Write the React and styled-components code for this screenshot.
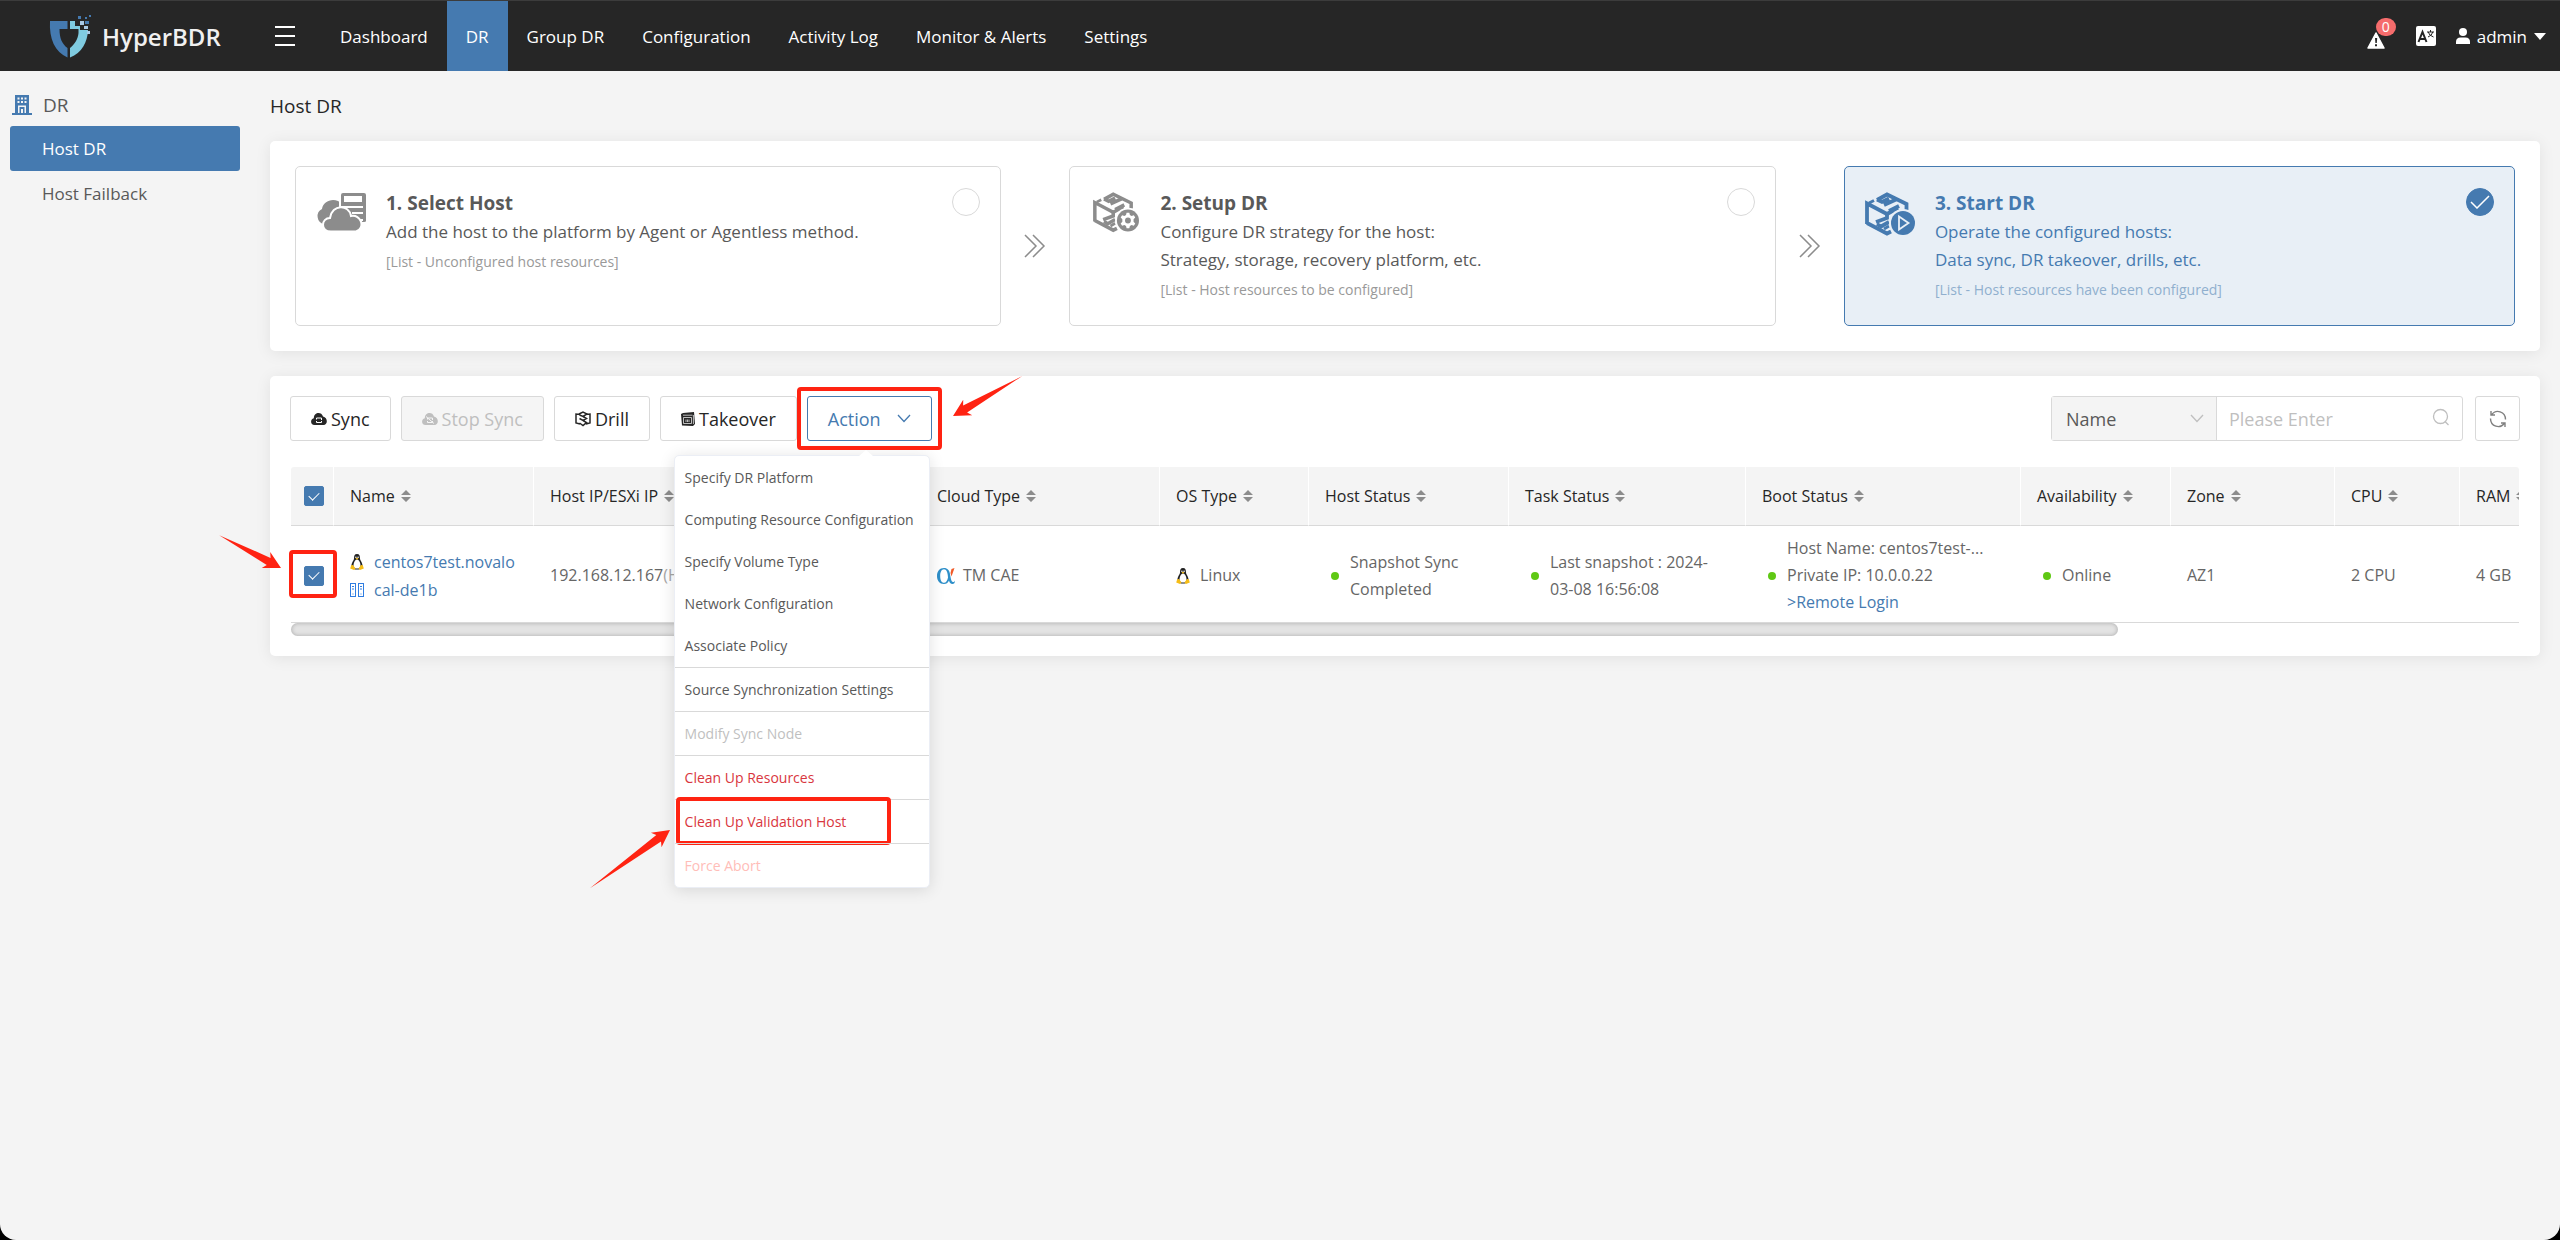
import { useState } from "react";
import styled, { createGlobalStyle } from "styled-components";

const blue = "#457ab0";
const red = "#ff2312";

const navItems = [
  "Dashboard",
  "DR",
  "Group DR",
  "Configuration",
  "Activity Log",
  "Monitor & Alerts",
  "Settings",
];

const steps = [
  {
    title: "1. Select Host",
    lines: ["Add the host to the platform by Agent or Agentless method."],
    hint: "[List - Unconfigured host resources]",
    icon: "cloud",
  },
  {
    title: "2. Setup DR",
    lines: [
      "Configure DR strategy for the host:",
      "Strategy, storage, recovery platform, etc.",
    ],
    hint: "[List - Host resources to be configured]",
    icon: "gear",
  },
  {
    title: "3. Start DR",
    lines: [
      "Operate the configured hosts:",
      "Data sync, DR takeover, drills, etc.",
    ],
    hint: "[List - Host resources have been configured]",
    icon: "play",
  },
];

const columns = [
  { label: "Name", width: 200 },
  { label: "Host IP/ESXi IP", width: 387 },
  { label: "Cloud Type", width: 239 },
  { label: "OS Type", width: 149 },
  { label: "Host Status", width: 200 },
  { label: "Task Status", width: 237 },
  { label: "Boot Status", width: 275 },
  { label: "Availability", width: 150 },
  { label: "Zone", width: 164 },
  { label: "CPU", width: 125 },
  { label: "RAM", width: 261 },
];

const configActions = [
  "Specify DR Platform",
  "Computing Resource Configuration",
  "Specify Volume Type",
  "Network Configuration",
  "Associate Policy",
];

const hostActions = [
  { label: "Source Synchronization Settings" },
  { label: "Modify Sync Node", disabled: true },
  { label: "Clean Up Resources", danger: true },
  { label: "Clean Up Validation Host", danger: true, marked: true },
  { label: "Force Abort", danger: true, disabled: true },
];

/* ---------- icons ---------- */

const Logo = () => (
  <svg width="44" height="44" viewBox="0 0 44 44" aria-hidden="true">
    <path
      fill={blue}
      d="M1 7H18.500V15H10.500C10.500 24 13 30 18.500 34V43.500C6 38 0 25 1 7Z"
    />
    <path
      fill="#7fcbe0"
      d="M21 7H26V12H31V16H39C38.500 28 33 39 21 43.500V34C26 30 29 25 29.500 19V15H21Z"
    />
    <path fill="#a9c9e4" d="M31 7h4v4h-4zM35 12h4v3h-4zM38 17h3v3h-3z" />
    <path fill={blue} d="M29 2h3v3h-3zM36 7h4v3h-4zM40 1h2v2h-2zM36 3h2v2h-2z" />
  </svg>
);

const BuildingIcon = () => (
  <svg width="20" height="20" viewBox="0 0 20 20" aria-hidden="true">
    <path
      fill={blue}
      fillRule="evenodd"
      d="M3 0H17V18H20V20H0V18H3ZM5.500 2.500V4.500H7.500V2.500ZM9 2.500V4.500H11V2.500ZM12.500 2.500V4.500H14.500V2.500ZM5.500 6V8H7.500V6ZM9 6V8H11V6ZM12.500 6V8H14.500V6ZM6 10.500V18H7.500V12H12.500V18H14V10.500ZM9 14V18H11V14Z"
    />
  </svg>
);

const AlertIcon = () => (
  <svg width="18" height="17" viewBox="0 0 18 17" aria-hidden="true">
    <path
      fill="#fff"
      stroke="#fff"
      strokeWidth="1.500"
      strokeLinejoin="round"
      d="M9 1 17 16H1Z"
    />
    <path fill="#262626" d="M8 6h2.200l-.4 5h-1.400zM8 12.200h2v2H8z" />
  </svg>
);

const LanguageIcon = () => (
  <svg width="20" height="20" viewBox="0 0 20 20" aria-hidden="true">
    <rect width="20" height="20" rx="2" fill="#fff" />
    <path
      fill="none"
      stroke="#262626"
      strokeWidth="2"
      d="M2.500 16 6.500 6 10.500 16M4 13H9"
    />
    <path
      fill="none"
      stroke="#262626"
      strokeWidth="1"
      d="M11 6H18M14.500 4V6M12 11Q16 9.500 16.800 6M12.200 6Q13 9.500 17.500 11"
    />
  </svg>
);

const UserIcon = () => (
  <svg width="14" height="16" viewBox="0 0 14 16" aria-hidden="true">
    <circle cx="7" cy="4" r="4" fill="#fff" />
    <path fill="#fff" d="M0 16V14Q0 9.500 4.500 9.500H9.500Q14 9.500 14 14V16Z" />
  </svg>
);

const CloudServerIcon = () => (
  <svg width="50" height="40" viewBox="0 0 50 40" aria-hidden="true">
    <path
      fill="#8c8c8c"
      d="M8 32A8 8 0 0 1 6 17C7 10 15 6 22 9L36 18 20 32Z"
    />
    <path
      fill="#8c8c8c"
      stroke="#fff"
      strokeWidth="2"
      d="M27 0H48Q51 0 51 3V29Q51 31 48 31H24V3Q24 0 27 0Z"
    />
    <rect x="28" y="4" width="18" height="6" fill="#fff" />
    <path
      fill="none"
      stroke="#fff"
      strokeWidth="2"
      d="M24 15H47M36 21H47M38 28H47"
    />
    <path
      fill="#8c8c8c"
      stroke="#fff"
      strokeWidth="2"
      d="M15 39.500C4 39.500 5 26 14 26C16 12 33 12 35 24C45 22 50 36 40 39.500Z"
    />
  </svg>
);

const CubeIcon = ({ kind, size }) => {
  const color = kind === "play" ? blue : "#8c8c8c";
  const halo = kind === "play" ? "#e8eff6" : "#fff";
  return (
    <svg width={size} height={size * 0.9} viewBox="0 0 50 45" aria-hidden="true">
      <g fill="none" stroke={color} strokeWidth="3.800">
        <path d="M12 8 22 2.500 41.500 12V18" />
        <path d="M12 7.500 17 10 24 6.500M19 13 31 7.500M24 19 34 14" />
        <path d="M2 32V11.500L22 22 33 16M2 31 22 41.500 26 39.500" />
        <path d="M22 20.500V26L11 30M24 30 16 34.500 12 32" />
        <path d="M4 11 9 8.500M24 34 19 37" strokeWidth="3" />
      </g>
      <circle cx="38" cy="31" r="14" fill={halo} />
      <circle cx="38" cy="31" r="12" fill={color} />
      {kind === "play" ? (
        <path
          d="M34 24.500V37.500L43.500 31Z"
          fill="none"
          stroke="#e8eff6"
          strokeWidth="1.800"
        />
      ) : (
        <>
          <path
            fill="#fff"
            d="m36.500 22.500h3l.6 2.500 1.800 1 2.500-.8 1.500 2.600-1.800 1.900v2.600l1.800 1.900-1.500 2.600-2.500-.8-1.800 1-.6 2.500h-3l-.6-2.500-1.800-1-2.500.8-1.500-2.600 1.800-1.900v-2.600l-1.800-1.900 1.500-2.600 2.500.8 1.800-1z"
          />
          <circle cx="38" cy="31" r="3.200" fill={color} />
        </>
      )}
    </svg>
  );
};

const DoubleArrowIcon = () => (
  <svg width="22" height="24" viewBox="0 0 22 24" aria-hidden="true">
    <path
      fill="none"
      stroke="#8c8c8c"
      strokeWidth="1.500"
      d="M1 1 12 12 1 23M9 1 20 12 9 23"
    />
  </svg>
);

const TickIcon = () => (
  <svg width="20" height="14" viewBox="0 0 20 14" aria-hidden="true">
    <path fill="none" stroke="#fff" strokeWidth="1.500" d="M1 7 7 13 19 1" />
  </svg>
);

const CloudSyncIcon = ({ color = "#262626", off }) => (
  <svg width="16" height="12" viewBox="0 0 16 12" aria-hidden="true">
    <path
      fill={color}
      d="M3.500 12C-.8 12-1 6 2.800 5.200C3-1 10.500-1.500 12 3.500C17 4.500 17 12 12.500 12Z"
    />
    <path
      fill="none"
      stroke={off ? "#f5f5f5" : "#fff"}
      d="M5.500 6.500V5H10.500V7M10.500 8V9.500H5.500V8"
    />
    {off && <path stroke="#f5f5f5" d="M4 3.500 12 10.500" />}
  </svg>
);

const DrillIcon = () => (
  <svg width="16" height="16" viewBox="0 0 16 16" aria-hidden="true">
    <path
      fill="none"
      stroke="#262626"
      strokeWidth="1.500"
      d="M5.500 3.500 1 3V12L5 13M10.500 3.500 15 3V12L11 13M4 3 8 1 12 3 8 5.500 4.500 4M8 5.500 11.500 7.500 8 9.500 4.500 7.500M8 9.500 11.500 11.500 8 14.500 4.500 12"
    />
  </svg>
);

const TakeoverIcon = () => (
  <svg width="14" height="14" viewBox="0 0 14 14" aria-hidden="true">
    <path fill="#262626" d="M2 1 13 0 14 12 12 14 1 13.500 0 2Z" />
    <path
      fill="none"
      stroke="#fff"
      strokeWidth=".7"
      d="M2 3.200H11.500M2.500 11.500V5.500H10.500V11.500ZM5 7.500V10M6.500 7.500V10M8 7.500V10M12.400 3V12"
    />
  </svg>
);

const ChevronDown = ({ color }) => (
  <svg width="14" height="9" viewBox="0 0 14 9" aria-hidden="true">
    <path fill="none" stroke={color} strokeWidth="1.300" d="M1 1 7 7.500 13 1" />
  </svg>
);

const SearchIcon = () => (
  <svg width="18" height="18" viewBox="0 0 18 18" aria-hidden="true">
    <circle cx="8.500" cy="8.500" r="7" fill="none" stroke="#bfbfbf" strokeWidth="1.300" />
    <path stroke="#bfbfbf" strokeWidth="1.300" d="M13 13.500 16.500 17" />
  </svg>
);

const RefreshIcon = () => (
  <svg width="18" height="18" viewBox="0 0 18 18" aria-hidden="true">
    <path
      fill="none"
      stroke="#808080"
      strokeWidth="1.400"
      d="M2 1V5H6M2.500 5C7-1.500 16.500 1.500 16.500 9.500M16 17V13H12M15.500 13C11 19.500 1.500 16.500 1.500 8.500"
    />
  </svg>
);

const SortIcon = () => (
  <svg width="10" height="12" viewBox="0 0 10 12" aria-hidden="true">
    <path fill="#8c8c8c" d="M5 0 10 5H0ZM5 12 0 7H10Z" />
  </svg>
);

const TuxIcon = () => (
  <svg width="14" height="16" viewBox="0 0 14 16" aria-hidden="true">
    <path
      fill="#222"
      d="M7 0C9.500 0 10 2 10 4.500C10 6.500 12.500 8 12.500 12C12 15 9 15.500 7 15.500C5 15.500 2 15 1.500 12C1.500 8 4 6.500 4 4.500C4 2 4.500 0 7 0Z"
    />
    <path
      fill="#fff"
      d="M7 5.500C9 5.500 10.500 9 10.500 11.500C10.500 14 9 14.500 7 14.500C5 14.500 3.500 14 3.500 11.500C3.500 9 5 5.500 7 5.500Z"
    />
    <circle cx="5.900" cy="3.200" r=".8" fill="#fff" />
    <circle cx="8.100" cy="3.200" r=".8" fill="#fff" />
    <path
      fill="#f6bd16"
      d="M5.500 4.500 7 3.800 8.500 4.500 7 5.800ZM.2 14.500 1.200 11.200 3 11 5.500 14.500 4 16ZM13.800 14.500 12.800 11.200 11 11 8.500 14.500 10 16Z"
    />
  </svg>
);

const ServerIcon = () => (
  <svg width="14" height="14" viewBox="0 0 14 14" aria-hidden="true">
    <g fill="none" stroke="#2f7de1">
      <rect x=".5" y=".5" width="5" height="13" />
      <rect x="8.500" y=".5" width="5" height="13" />
      <path d="M2 3.500H4M2 6H4M10 3.500H12M10 6H12M2.500 11H3.500M10.500 11H11.500" />
    </g>
  </svg>
);

const AlphaIcon = () => (
  <svg width="19" height="16" viewBox="0 0 19 16" aria-hidden="true">
    <path
      fill="#2e8fc9"
      fillRule="evenodd"
      d="M7 0C10.500 0 12.500 2.500 13 6C13.800 11 14.500 14 16 14C17 14 17.500 13.500 18 12.500C18 15 17 16 15.500 16C13.500 16 12.500 14.500 12 12.500C11 15 9.300 16 7 16C2.500 16 0 12.500 0 8C0 3.500 2.500 0 7 0ZM7 1.200C4.500 1.200 3.200 4 3.200 8C3.200 12 4.500 14.800 7 14.800C9 14.800 10.500 12.500 11 9.500C10.800 4.500 9.500 1.200 7 1.200Z"
    />
    <path fill="#f05a28" d="M14.500 1 17.500 0 14.500 8.500 13.500 5Z" />
  </svg>
);

const Pointer = ({ angle, length, ...rest }) => (
  <PointerSvg
    width="200"
    height="200"
    viewBox="-100 -100 200 200"
    aria-hidden="true"
    {...rest}
  >
    <path
      fill={red}
      transform={`rotate(${angle})`}
      d={`M0 0 L-17 -9 L-14 -4 L${-length} 0 L-14 4 L-17 9 Z`}
    />
  </PointerSvg>
);

/* ---------- page ---------- */

const StepIcon = ({ kind }) => {
  if (kind === "cloud") return <CloudServerIcon />;
  return <CubeIcon kind={kind} size={kind === "play" ? 50 : 46} />;
};

export default function App() {
  const [checked, setChecked] = useState(true);
  const [field, setField] = useState("Name");
  const [keyword, setKeyword] = useState("");

  const handleCheck = () => setChecked(!checked);

  return (
    <Page>
      <GlobalStyle />
      <Header>
        <Brand href="#">
          <Logo />
          <span>HyperBDR</span>
        </Brand>
        <MenuToggle type="button" aria-label="Toggle menu">
          <i />
          <i />
          <i />
        </MenuToggle>
        <Nav>
          {navItems.map((item) => (
            <NavLink key={item} href="#" $active={item === "DR"}>
              {item}
            </NavLink>
          ))}
        </Nav>
        <HeaderTools>
          <ToolButton type="button" aria-label="Alerts" $low>
            <AlertIcon />
            <Badge>0</Badge>
          </ToolButton>
          <ToolButton type="button" aria-label="Language">
            <LanguageIcon />
          </ToolButton>
          <ToolButton type="button">
            <UserIcon />
            admin
            <Caret />
          </ToolButton>
        </HeaderTools>
      </Header>

      <Body>
        <Sidebar>
          <SideTitle>
            <BuildingIcon />
            DR
          </SideTitle>
          <SideLink href="#" $active>
            Host DR
          </SideLink>
          <SideLink href="#">Host Failback</SideLink>
        </Sidebar>

        <Main>
          <PageTitle>Host DR</PageTitle>

          <StepCard>
            {steps.map((step, index) => {
              const active = step.icon === "play";
              return [
                index > 0 && (
                  <StepArrow key={`arrow-${index}`}>
                    <DoubleArrowIcon />
                  </StepArrow>
                ),
                <Step key={step.title} $active={active}>
                  <StepIconBox $inset={step.icon === "gear"}>
                    <StepIcon kind={step.icon} />
                  </StepIconBox>
                  <StepText>
                    <h2>{step.title}</h2>
                    {step.lines.map((line) => (
                      <p key={line}>{line}</p>
                    ))}
                    <small>{step.hint}</small>
                  </StepText>
                  <StepMark $active={active}>{active && <TickIcon />}</StepMark>
                </Step>,
              ];
            })}
          </StepCard>

          <ListCard>
            <Toolbar>
              <Button type="button">
                <CloudSyncIcon />
                Sync
              </Button>
              <Button type="button" disabled>
                <CloudSyncIcon color="#bfbfbf" off />
                Stop Sync
              </Button>
              <Button type="button">
                <DrillIcon />
                Drill
              </Button>
              <Button type="button">
                <TakeoverIcon />
                Takeover
              </Button>
              <ActionBox>
                <ActionButton type="button" aria-haspopup="menu">
                  Action
                  <ChevronDown color={blue} />
                </ActionButton>
                <Menu>
                  <MenuGroup>
                    {configActions.map((label) => (
                      <MenuItem key={label} type="button">
                        {label}
                      </MenuItem>
                    ))}
                  </MenuGroup>
                  {hostActions.map((item) => (
                    <MenuItem
                      key={item.label}
                      type="button"
                      disabled={item.disabled}
                      $danger={item.danger}
                      $divided
                    >
                      {item.label}
                      {item.marked && (
                        <>
                          <ItemMark />
                          <ItemPointer angle={-36} length={99} />
                        </>
                      )}
                    </MenuItem>
                  ))}
                </Menu>
                <ActionMark />
                <ActionPointer angle={150} length={80} />
              </ActionBox>

              <SearchGroup>
                <SelectBox>
                  <select
                    aria-label="Search field"
                    value={field}
                    onChange={(e) => setField(e.target.value)}
                  >
                    <option>Name</option>
                  </select>
                  <ChevronDown color="#bfbfbf" />
                </SelectBox>
                <InputBox>
                  <input
                    type="text"
                    aria-label="Keyword"
                    placeholder="Please Enter"
                    value={keyword}
                    onChange={(e) => setKeyword(e.target.value)}
                  />
                  <SearchIcon />
                </InputBox>
              </SearchGroup>
              <RefreshButton type="button" aria-label="Refresh">
                <RefreshIcon />
              </RefreshButton>
            </Toolbar>

            <TableWrapper>
              <Table>
                <colgroup>
                  <Col $width={43} />
                  {columns.map((column) => (
                    <Col key={column.label} $width={column.width} />
                  ))}
                </colgroup>
                <thead>
                  <tr>
                    <th>
                      <Checkbox
                        type="checkbox"
                        aria-label="Select all hosts"
                        checked={checked}
                        onChange={handleCheck}
                      />
                    </th>
                    {columns.map((column) => (
                      <th key={column.label}>
                        <HeadCell>
                          {column.label}
                          <SortIcon />
                        </HeadCell>
                      </th>
                    ))}
                  </tr>
                </thead>
                <tbody>
                  <tr>
                    <td>
                      <Checkbox
                        type="checkbox"
                        aria-label="Select centos7test.novalocal-de1b"
                        checked={checked}
                        onChange={handleCheck}
                      />
                    </td>
                    <td>
                      <HostName>
                        <IconColumn>
                          <TuxIcon />
                          <ServerIcon />
                        </IconColumn>
                        <a href="#">centos7test.novalocal-de1b</a>
                      </HostName>
                    </td>
                    <td>
                      192.168.12.167<Muted>(H</Muted>
                    </td>
                    <td>
                      <IconCell>
                        <AlphaIcon />
                        TM CAE
                      </IconCell>
                    </td>
                    <td>
                      <IconCell $wide>
                        <TuxIcon />
                        Linux
                      </IconCell>
                    </td>
                    <td>
                      <Status>
                        Snapshot Sync
                        <br />
                        Completed
                      </Status>
                    </td>
                    <td>
                      <Status>
                        Last snapshot : 2024-
                        <br />
                        03-08 16:56:08
                      </Status>
                    </td>
                    <td>
                      <Status>
                        Host Name: centos7test-...
                        <br />
                        Private IP: 10.0.0.22
                        <br />
                        <a href="#">&gt;Remote Login</a>
                      </Status>
                    </td>
                    <td>
                      <Status>Online</Status>
                    </td>
                    <td>AZ1</td>
                    <td>2 CPU</td>
                    <td>4 GB</td>
                  </tr>
                </tbody>
              </Table>
            </TableWrapper>
            <ScrollTrack>
              <ScrollThumb />
              <RowMark />
              <RowPointer angle={28} length={70} />
            </ScrollTrack>
          </ListCard>
        </Main>
      </Body>
    </Page>
  );
}

const GlobalStyle = createGlobalStyle`
  * {
    box-sizing: border-box;
  }

  body {
    margin: 0;
    background: #000;
  }

  body, button, input, select {
    font-family: "Open Sans", "Noto Sans", sans-serif;
    font-size: 17px;
  }

  a {
    color: ${blue};
    text-decoration: none;
  }

  button {
    cursor: pointer;
  }

  svg {
    display: block;
    flex-shrink: 0;
  }
`;

const Page = styled.div`
  min-height: 100vh;
  background: #f4f4f4;
  border-radius: 0 0 16px 16px;
  overflow: hidden;
  color: #595959;
`;

const Header = styled.header`
  display: flex;
  height: 71px;
  background: #262626;
  border-top: 1px solid #3c3c3c;
`;

const Brand = styled.a`
  display: flex;
  align-items: center;
  gap: 9px;
  width: 226px;
  margin-left: 49px;
  color: #f0f0f0;
  font-size: 24px;
  font-weight: 600;
`;

const MenuToggle = styled.button`
  display: flex;
  flex-direction: column;
  justify-content: center;
  gap: 7px;
  padding: 0;
  margin-right: 26px;
  border: 0;
  background: none;

  i {
    width: 20px;
    height: 2px;
    background: #fff;
  }
`;

const Nav = styled.nav`
  display: flex;
`;

const NavLink = styled.a`
  display: flex;
  align-items: center;
  padding: 0 19px;
  color: #fff;
  background: ${({ $active }) => ($active ? blue : "transparent")};
`;

const HeaderTools = styled.div`
  display: flex;
  align-items: center;
  gap: 20px;
  margin-left: auto;
  padding-right: 14px;
`;

const ToolButton = styled.button`
  position: relative;
  display: flex;
  align-items: center;
  gap: 7px;
  padding: 0;
  margin-right: ${({ $low }) => ($low ? "11px" : "0")};
  padding-top: ${({ $low }) => ($low ? "8px" : "0")};
  border: 0;
  background: none;
  color: #fff;
`;

const Badge = styled.span`
  position: absolute;
  top: -6px;
  left: 9px;
  width: 20px;
  height: 18px;
  border-radius: 9px;
  background: #f56c6c;
  font-size: 14px;
  line-height: 18px;
`;

const Caret = styled.i`
  border: 6px solid transparent;
  border-top: 7px solid #fff;
  border-bottom: 0;
`;

const Body = styled.div`
  display: flex;
`;

const Sidebar = styled.aside`
  flex: 0 0 250px;
  padding: 13px 10px;
`;

const SideTitle = styled.div`
  display: flex;
  align-items: center;
  gap: 11px;
  height: 42px;
  padding-left: 2px;
  font-size: 19px;
`;

const SideLink = styled.a`
  display: flex;
  align-items: center;
  height: 45px;
  padding-left: 32px;
  border-radius: 3px;
  color: ${({ $active }) => ($active ? "#fff" : "#595959")};
  background: ${({ $active }) => ($active ? blue : "transparent")};
`;

const Main = styled.main`
  flex: 1;
  min-width: 0;
  padding: 0 20px;
`;

const PageTitle = styled.h1`
  margin: 0;
  color: #262626;
  font-size: 19px;
  font-weight: 400;
  line-height: 70px;
`;

const Card = styled.section`
  background: #fff;
  border-radius: 5px;
  box-shadow: 0 2px 16px rgba(0, 0, 0, 0.08);
`;

const StepCard = styled(Card)`
  display: grid;
  grid-template-columns: 1fr 68px 1fr 68px 0.95fr;
  padding: 25px;
  margin-bottom: 25px;
`;

const StepArrow = styled.div`
  display: flex;
  align-items: center;
  justify-content: center;
`;

const Step = styled.div`
  display: flex;
  height: 160px;
  padding: 21px 20px;
  border: 1px solid ${({ $active }) => ($active ? blue : "#d9d9d9")};
  border-radius: 5px;
  color: ${({ $active }) => ($active ? blue : "#595959")};
  background: ${({ $active }) => ($active ? "#e8eff6" : "#fff")};

  small {
    color: ${({ $active }) => ($active ? "#90afce" : "#999")};
  }
`;

const StepIconBox = styled.div`
  width: 70px;
  padding-top: 4px;
  padding-left: ${({ $inset }) => ($inset ? "3px" : "0")};
`;

const StepText = styled.div`
  flex: 1;

  h2 {
    margin: 0;
    font-size: 19px;
    font-weight: 700;
    line-height: 30px;
  }

  p {
    margin: 0;
    line-height: 28px;
  }

  small {
    display: block;
    font-size: 14px;
    line-height: 32px;
  }
`;

const StepMark = styled.span`
  display: flex;
  align-items: center;
  justify-content: center;
  width: 28px;
  height: 28px;
  border: 1px solid ${({ $active }) => ($active ? blue : "#d9d9d9")};
  border-radius: 50%;
  background: ${({ $active }) => ($active ? blue : "#fff")};
`;

const ListCard = styled(Card)`
  padding: 20px;
`;

const Toolbar = styled.div`
  display: flex;
  gap: 10px;
  margin-bottom: 26px;
`;

const Button = styled.button`
  display: flex;
  align-items: center;
  gap: 4px;
  height: 45px;
  padding: 0 20px;
  border: 1px solid #d9d9d9;
  border-radius: 3px;
  color: #262626;
  background: #fff;
  font-size: 18px;

  &:disabled {
    color: #bfbfbf;
    background: #f5f5f5;
    cursor: not-allowed;
  }
`;

const ActionBox = styled.div`
  position: relative;
  z-index: 2;
`;

const ActionButton = styled(Button)`
  gap: 16px;
  border-color: ${blue};
  color: ${blue};
`;

const Menu = styled.div`
  position: absolute;
  top: 59px;
  right: 2px;
  width: 256px;
  border: 1px solid #ebeef5;
  border-radius: 5px;
  background: #fff;
  box-shadow: 0 2px 16px rgba(0, 0, 0, 0.12);

  &::before {
    content: "";
    position: absolute;
    top: -6px;
    right: 56px;
    border: 7px solid transparent;
    border-top: 0;
    border-bottom: 6px solid #fff;
  }
`;

const MenuGroup = styled.div`
  padding-bottom: 1px;
`;

const MenuItem = styled.button`
  position: relative;
  display: block;
  width: 100%;
  height: ${({ $divided }) => ($divided ? "44px" : "42px")};
  padding: 0 10px;
  border: 0;
  border-top: ${({ $divided }) => ($divided ? "1px solid #d9d9d9" : "0")};
  background: none;
  color: ${({ $danger }) => ($danger ? "#d9363e" : "#595959")};
  font-size: 14px;
  text-align: left;
  white-space: nowrap;

  &:disabled {
    color: ${({ $danger }) => ($danger ? "#ffbdb8" : "#bfbfbf")};
    cursor: not-allowed;
  }
`;

const Mark = styled.span`
  position: absolute;
  border: 4px solid ${red};
  border-radius: 4px;
  pointer-events: none;
`;

const ActionMark = styled(Mark)`
  inset: -9px -10px;
`;

const ItemMark = styled(Mark)`
  top: -3px;
  left: 1px;
  width: 215px;
  height: 48px;
`;

const RowMark = styled(Mark)`
  left: -2px;
  bottom: 38px;
  width: 48px;
  height: 48px;
`;

const PointerSvg = styled.svg`
  position: absolute;
  pointer-events: none;
`;

const ActionPointer = styled(Pointer)`
  top: -80px;
  left: 46px;
`;

const ItemPointer = styled(Pointer)`
  top: -70px;
  left: -105px;
`;

const RowPointer = styled(Pointer)`
  bottom: -32px;
  left: -110px;
`;

const SearchGroup = styled.div`
  display: flex;
  width: 412px;
  height: 45px;
  margin-left: auto;
  margin-right: 2px;
  border: 1px solid #d9d9d9;
  border-radius: 3px;
`;

const SelectBox = styled.div`
  display: flex;
  flex: 0 0 165px;
  align-items: center;
  padding-right: 12px;
  border-right: 1px solid #d9d9d9;
  background: #f4f4f4;

  select {
    flex: 1;
    height: 100%;
    padding: 0 14px;
    border: 0;
    appearance: none;
    background: none;
    color: #595959;
    font-size: 18px;
  }
`;

const InputBox = styled.div`
  display: flex;
  flex: 1;
  align-items: center;
  min-width: 0;
  padding: 0 12px;

  input {
    flex: 1;
    min-width: 0;
    padding: 0;
    border: 0;
    outline: 0;
    font-size: 18px;
  }

  input::placeholder {
    color: #bfbfbf;
  }

  svg {
    margin-bottom: 4px;
  }
`;

const RefreshButton = styled(Button)`
  justify-content: center;
  width: 45px;
  padding: 0;
`;

const TableWrapper = styled.div`
  margin: 0 1px;
  overflow: hidden;
  border-radius: 3px 3px 0 0;
`;

const Table = styled.table`
  width: 2430px;
  table-layout: fixed;
  border-collapse: separate;
  border-spacing: 0;
  color: #666;
  font-size: 16px;
  line-height: 27px;

  th,
  td {
    padding: 0 16px;
    border-bottom: 1px solid #d9d9d9;
    text-align: left;
    font-weight: 400;
    white-space: nowrap;
  }

  th {
    height: 59px;
    border-right: 1px solid #fff;
    background: #f4f4f4;
    color: #262626;
  }

  td {
    height: 97px;
    padding-top: 3px;
  }

  th:first-child,
  td:first-child {
    padding-left: 13px;
    padding-right: 0;
  }
`;

const Col = styled.col`
  width: ${({ $width }) => $width}px;
`;

const HeadCell = styled.span`
  display: flex;
  align-items: center;
  gap: 6px;
`;

const Checkbox = styled.input`
  display: flex;
  align-items: center;
  justify-content: center;
  width: 20px;
  height: 20px;
  margin: 0;
  border: 1px solid #d9d9d9;
  border-radius: 2px;
  appearance: none;

  &:checked {
    border-color: ${blue};
    background: ${blue};
  }

  &:checked::after {
    content: "";
    width: 5px;
    height: 9px;
    margin-bottom: 3px;
    border: solid #fff;
    border-width: 0 1px 1px 0;
    transform: rotate(45deg);
  }
`;

const HostName = styled.div`
  display: flex;
  align-items: center;
  gap: 10px;
  line-height: 28px;

  a {
    width: 145px;
    white-space: normal;
    word-break: break-all;
  }
`;

const IconColumn = styled.span`
  display: flex;
  flex-direction: column;
  gap: 13px;
`;

const IconCell = styled.span`
  display: flex;
  align-items: center;
  gap: ${({ $wide }) => ($wide ? "10px" : "7px")};
`;

const Muted = styled.span`
  color: #a6a6a6;
`;

const Status = styled.div`
  position: relative;
  padding-left: 25px;

  &::before {
    content: "";
    position: absolute;
    top: calc(50% - 4px);
    left: 6px;
    width: 8px;
    height: 8px;
    border-radius: 50%;
    background: #5fc814;
  }
`;

const ScrollTrack = styled.div`
  position: relative;
  height: 13px;
  margin: 0 1px;
`;

const ScrollThumb = styled.div`
  width: 82%;
  height: 13px;
  border-radius: 7px;
  background: #e3e3e3;
  box-shadow: inset 0 0 4px rgba(0, 0, 0, 0.25);
`;
